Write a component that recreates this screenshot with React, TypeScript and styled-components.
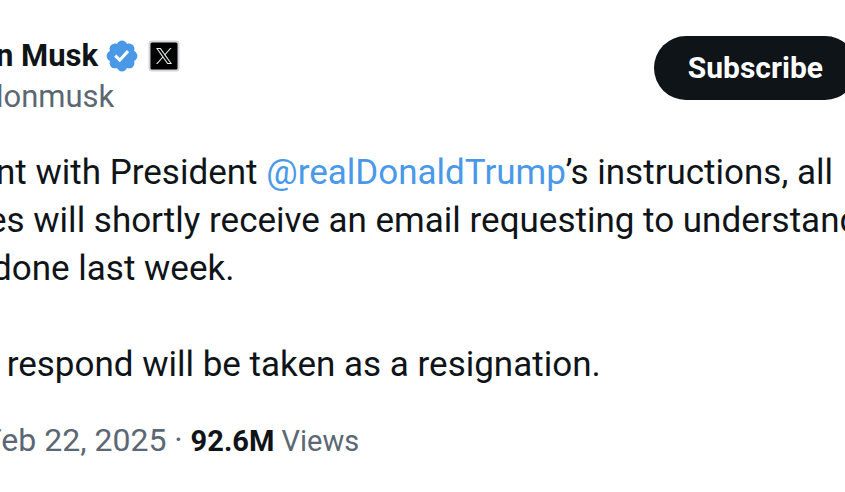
import React from 'react';
import styled, { createGlobalStyle } from 'styled-components';

const ink = '#0f1419';
const muted = '#5b6773';
const accent = '#4a99e9';

const GlobalStyle = createGlobalStyle`
  body {
    margin: 0;
    background: #fff;
    color: ${ink};
    font-family: Roboto, "Liberation Sans", sans-serif;
  }
`;

const Post = styled.article`
  box-sizing: border-box;
  min-height: 100vh;
  overflow: hidden;
  padding: 36px 0 24px;
`;

const Header = styled.header`
  display: flex;
  justify-content: space-between;
  align-items: flex-start;
  margin: 0 -12px 0 -4px;
`;

const NameRow = styled.div`
  display: flex;
  align-items: center;
  height: 40px;
  white-space: nowrap;
`;

const Name = styled.h1`
  margin: 0;
  font-size: 31px;
  font-weight: 700;
  line-height: 40px;
`;

const Verified = styled.svg`
  width: 36px;
  height: 36px;
  margin-left: 6px;
  fill: ${accent};
`;

const Affiliate = styled.svg`
  width: 32px;
  height: 32px;
  margin-left: 8px;
`;

const Handle = styled.a`
  display: block;
  color: ${muted};
  font-size: 31px;
  line-height: 42px;
  text-decoration: none;
`;

const SubscribeButton = styled.button`
  height: 64px;
  padding: 0 34px;
  border: 0;
  border-radius: 32px;
  background: ${ink};
  color: #fff;
  font: 700 30px/64px Roboto, "Liberation Sans", sans-serif;
  cursor: pointer;
`;

const Body = styled.div`
  display: grid;
  gap: 48px;
  margin-top: 31px;
  font-size: 35px;
  line-height: 48px;
`;

const Paragraph = styled.p`
  margin: 0;
`;

/* $cut is how much of the line runs past the left edge of the card. */
const Line = styled.span<{ $cut: number }>`
  display: block;
  margin-left: -${({ $cut }) => $cut}px;
  white-space: pre;
`;

const Mention = styled.a`
  color: ${accent};
  text-decoration: none;
`;

const Meta = styled.footer`
  margin: 30px 0 0 -16px;
  color: ${muted};
  font-size: 29px;
  line-height: 42px;
  white-space: nowrap;
`;

const PostDate = styled.span`
  font-size: 32px;
`;

const Count = styled.strong`
  color: ${ink};
  font-weight: 700;
`;

export default function App() {
  return (
    <>
      <GlobalStyle />
      <Post>
        <Header>
          <div>
            <NameRow>
              <Name>n Musk</Name>
              <Verified viewBox="0 0 22 22" role="img" aria-label="Verified account">
                <path d="M20.396 11c-.018-.646-.215-1.275-.57-1.816-.354-.54-.852-.972-1.438-1.246.223-.607.27-1.264.14-1.897-.131-.634-.437-1.218-.882-1.687-.47-.445-1.053-.75-1.687-.882-.633-.13-1.29-.083-1.897.14-.273-.587-.704-1.086-1.245-1.44S11.647 1.62 11 1.604c-.646.017-1.273.213-1.813.568s-.969.854-1.24 1.44c-.608-.223-1.267-.272-1.902-.14-.635.13-1.22.436-1.69.882-.445.47-.749 1.055-.878 1.688-.13.633-.08 1.29.144 1.896-.587.274-1.087.705-1.443 1.245-.356.54-.555 1.17-.574 1.817.02.647.218 1.276.574 1.817.356.54.856.972 1.443 1.245-.224.606-.274 1.263-.144 1.896.13.634.433 1.218.877 1.688.47.443 1.054.747 1.687.878.633.132 1.29.084 1.897-.136.274.586.705 1.084 1.246 1.439.54.354 1.17.551 1.816.569.647-.016 1.276-.213 1.817-.567s.972-.854 1.245-1.44c.604.239 1.266.296 1.903.164.636-.132 1.22-.447 1.68-.907.46-.46.776-1.044.908-1.681s.075-1.299-.165-1.903c.586-.274 1.084-.705 1.439-1.246.354-.54.551-1.17.569-1.816zM9.662 14.85l-3.429-3.428 1.293-1.302 2.072 2.072 4.4-4.794 1.347 1.246z" />
              </Verified>
              <Affiliate viewBox="0 0 32 32" role="img" aria-label="X">
                <rect x="1.5" y="1.5" width="29" height="29" rx="2.5" fill="#000" stroke="#cfd4d8" strokeWidth="2" />
                <path
                  transform="translate(8 8) scale(.67)"
                  fill="#e7e9ea"
                  d="M14.258 10.152 23.176 0h-2.113l-7.747 8.813L7.133 0H0l9.352 13.328L0 23.973h2.113l8.176-9.309 6.531 9.309h7.133zM11.363 13.445l-.949-1.328L2.875 1.56h3.246l6.086 8.523.945 1.328 7.91 11.078h-3.246z"
                />
              </Affiliate>
            </NameRow>
            <Handle href="#profile">lonmusk</Handle>
          </div>
          <SubscribeButton type="button">Subscribe</SubscribeButton>
        </Header>
        <Body>
          <Paragraph>
            <Line $cut={4}>
              {'nt with President '}
              <Mention href="#mention">@realDonaldTrump</Mention>
              {'’s instructions, all'}
            </Line>
            <Line $cut={12}>es will shortly receive an email requesting to understand</Line>
            <Line $cut={8}>done last week.</Line>
          </Paragraph>
          <Paragraph>
            <Line $cut={22}>o respond will be taken as a resignation.</Line>
          </Paragraph>
        </Body>
        <Meta>
          <PostDate>
            <time dateTime="2025-02-22">Feb 22, 2025</time>
            {' · '}
          </PostDate>
          <Count>92.6M</Count> Views
        </Meta>
      </Post>
    </>
  );
}
